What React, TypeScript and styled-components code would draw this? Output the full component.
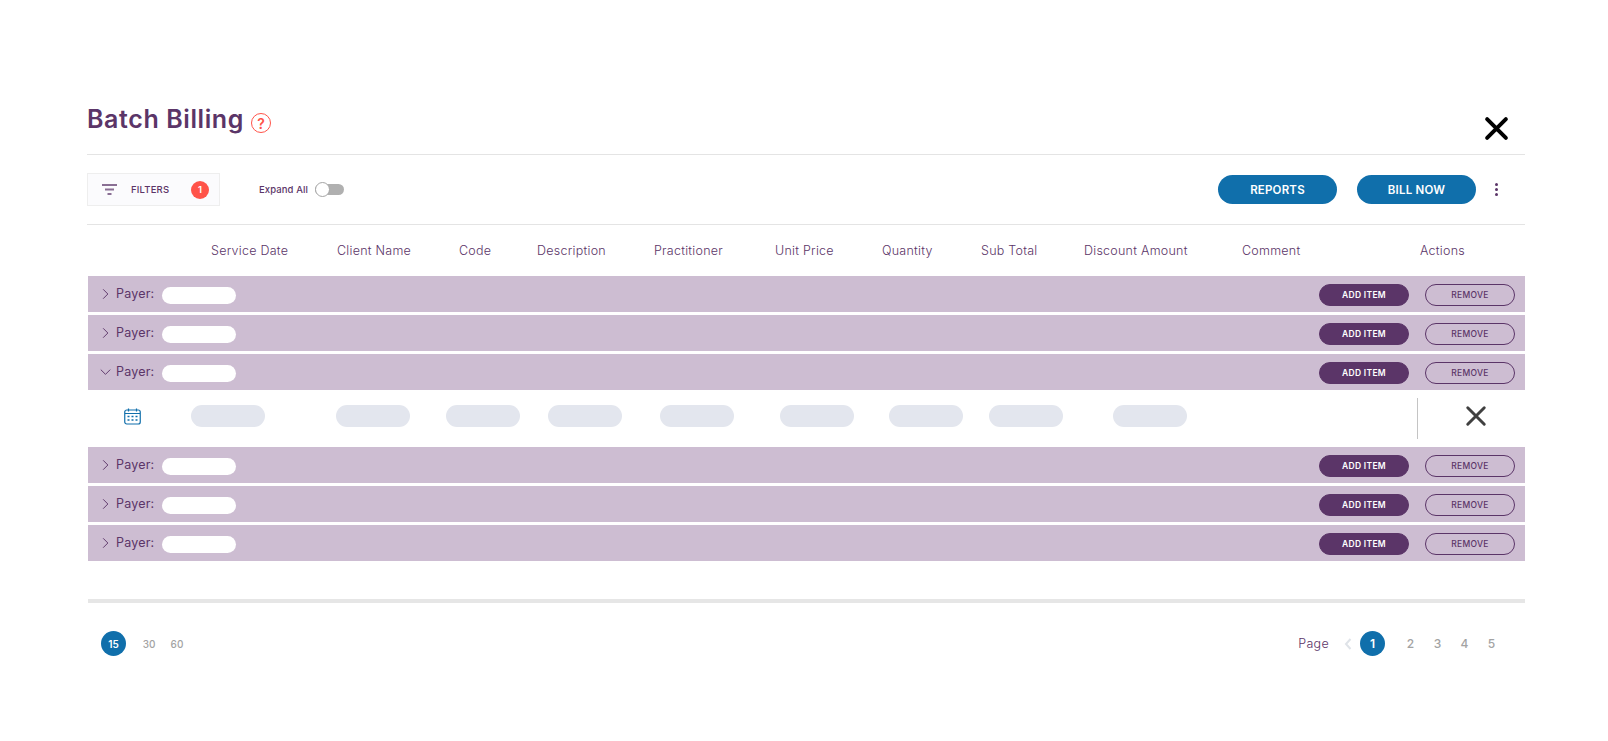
import React from 'react';
import styled, { createGlobalStyle } from 'styled-components';

const purple = '#5b3568';
const blue = '#106fab';

const GlobalStyle = createGlobalStyle`
  html, body {
    margin: 0;
    padding: 0;
    background: #fff;
    font-family: Inter, "Open Sans", sans-serif;
    color: ${purple};
  }
`;

const Page = styled.div`
  width: 1438px;
  margin-left: 87px;
  padding-top: 101px;
  padding-bottom: 60px;
`;

const Header = styled.header`
  height: 53px;
  display: flex;
  justify-content: space-between;
  border-bottom: 1px solid #e4e4e4;
`;

const TitleGroup = styled.div`
  display: flex;
  align-items: flex-start;
`;

const Title = styled.h1`
  margin: 0;
  font-size: 25px;
  line-height: 36px;
  font-weight: 600;
  letter-spacing: 0.6px;
  color: ${purple};
`;

const HelpBadge = styled.span`
  width: 20px;
  height: 20px;
  margin: 12px 0 0 7px;
  box-sizing: border-box;
  border: 1px solid #ff5349;
  border-radius: 50%;
  color: #ff5349;
  font-size: 14px;
  font-weight: 600;
  display: flex;
  align-items: center;
  justify-content: center;
`;

const CloseButton = styled.button`
  width: 25px;
  height: 25px;
  margin: 15px 16px 0 0;
  padding: 0;
  border: 0;
  background: none;
  color: #000;
`;

const Toolbar = styled.div`
  height: 69px;
  display: flex;
  align-items: center;
  border-bottom: 1px solid #e4e4e4;
`;

const FilterBox = styled.div`
  width: 133px;
  height: 33px;
  box-sizing: border-box;
  padding: 0 10px 0 14px;
  border: 1px solid #eeeeee;
  background: #fbfbfd;
  display: flex;
  align-items: center;
`;

const FilterLabel = styled.span`
  margin-left: 14px;
  font-size: 9.5px;
  font-weight: 500;
  letter-spacing: 0.2px;
  flex: 1;
`;

const CountBadge = styled.span`
  width: 18px;
  height: 18px;
  border-radius: 50%;
  background: #ff5349;
  color: #fff;
  font-size: 9.5px;
  font-weight: 600;
  display: flex;
  align-items: center;
  justify-content: center;
`;

const ExpandLabel = styled.span`
  margin-left: 39px;
  width: 56px;
  font-size: 9.5px;
  font-weight: 500;
  letter-spacing: 0.1px;
`;

const ToggleTrack = styled.span`
  width: 29px;
  height: 11px;
  border-radius: 6px;
  background: #b0b0b0;
  display: flex;
  align-items: center;
`;

const ToggleKnob = styled.span`
  width: 15px;
  height: 15px;
  box-sizing: border-box;
  border: 1px solid #a5a5a5;
  border-radius: 50%;
  background: #fff;
`;

const ToolbarActions = styled.div`
  margin-left: auto;
  display: flex;
  align-items: center;
  gap: 20px;
`;

const PrimaryButton = styled.button`
  width: 119px;
  height: 29px;
  padding: 0;
  border: 0;
  border-radius: 15px;
  background: ${blue};
  color: #fff;
  font-family: inherit;
  font-size: 11.5px;
  font-weight: 600;
  letter-spacing: 0.2px;
`;

const MenuDots = styled.span`
  width: 3px;
  margin: 0 27px 0 -1px;
  display: flex;
  flex-direction: column;
  gap: 2px;

  i {
    width: 3px;
    height: 3px;
    border-radius: 50%;
    background: ${purple};
  }
`;

const ColumnRow = styled.div`
  height: 51px;
  padding-left: 124px;
  display: grid;
  grid-template-columns: 126px 122px 78px 117px 121px 107px 99px 103px 158px 178px 1fr;
  align-items: center;
  font-size: 12.5px;
  font-weight: 300;
  letter-spacing: 0.25px;
  color: ${purple};
`;

const PayerRow = styled.div<{ $open?: boolean }>`
  height: 36px;
  margin: 0 0 ${(p) => (p.$open ? 0 : 3)}px 1px;
  padding: 0 10px 0 12px;
  background: #cdbdd2;
  display: flex;
  align-items: center;
`;

const Chevron = styled.span`
  width: 11px;
  height: 16px;
  display: flex;
  align-items: center;
  justify-content: center;
  margin-top: -1px;
`;

const PayerLabel = styled.span`
  margin-left: 5px;
  width: 46px;
  font-size: 12.5px;
  font-weight: 400;
  letter-spacing: 0.2px;
  margin-top: -1px;
`;

const PayerPill = styled.span`
  width: 74px;
  height: 17px;
  margin-top: 3px;
  border-radius: 9px;
  background: #fff;
`;

const RowAction = styled.button<{ $outline?: boolean }>`
  width: 90px;
  height: 22px;
  padding: 0;
  margin-top: 2px;
  margin-left: ${(p) => (p.$outline ? '16px' : 'auto')};
  box-sizing: border-box;
  border: 1px solid ${purple};
  border-radius: 11px;
  background: ${(p) => (p.$outline ? 'transparent' : purple)};
  color: ${(p) => (p.$outline ? purple : '#fff')};
  font-family: inherit;
  font-size: 8.5px;
  font-weight: ${(p) => (p.$outline ? 500 : 600)};
  letter-spacing: 0.3px;
`;

const DetailRow = styled.div`
  height: 57px;
  display: grid;
  grid-template-columns: 104px 145px 110px 102px 112px 120px 109px 100px 124px 304px 1fr;
  align-items: center;
`;

const CalendarCell = styled.span`
  display: flex;
  justify-content: flex-end;
  padding-right: 50px;
  margin-bottom: 5px;
`;

const ValuePill = styled.span`
  width: 74px;
  height: 22px;
  margin-bottom: 5px;
  border-radius: 11px;
  background: #e3e6ee;
`;

const RemoveCell = styled.span`
  grid-column: 11;
  height: 41px;
  box-sizing: border-box;
  padding: 0 0 5px 8px;
  border-left: 1px solid #c4c4c4;
  display: flex;
  align-items: center;
  justify-content: center;
  color: #404040;
`;

const ScrollBar = styled.div`
  height: 4px;
  margin: 38px 0 28px 1px;
  background: #e6e6e6;
`;

const Footer = styled.footer`
  padding: 0 20px 0 14px;
  display: flex;
  justify-content: space-between;
  align-items: center;
`;

const SizeGroup = styled.div`
  display: flex;
  align-items: center;
`;

const NumberCell = styled.span<{ $active?: boolean; $small?: boolean }>`
  width: ${(p) => (p.$active ? '25px' : p.$small ? '28px' : '27px')};
  height: 25px;
  margin-right: ${(p) => (p.$active && p.$small ? '9px' : 0)};
  border-radius: 50%;
  background: ${(p) => (p.$active ? blue : 'transparent')};
  color: ${(p) => (p.$active ? '#fff' : '#a3a3a3')};
  font-size: ${(p) => (p.$small ? '10px' : '12px')};
  font-weight: ${(p) => (p.$active ? 600 : 500)};
  display: flex;
  align-items: center;
  justify-content: center;
`;

const PageGroup = styled.div`
  display: flex;
  align-items: center;
`;

const PageLabel = styled.span`
  margin-right: 12px;
  font-size: 12.5px;
  font-weight: 300;
  letter-spacing: 0.3px;
`;

const PageGap = styled.span`
  width: 12px;
`;

const PrevArrow = styled.span`
  width: 13px;
  margin-right: 6px;
  display: flex;
  justify-content: center;
  color: #dfe3e8;
`;

const columns = [
  'Service Date',
  'Client Name',
  'Code',
  'Description',
  'Practitioner',
  'Unit Price',
  'Quantity',
  'Sub Total',
  'Discount Amount',
  'Comment',
  'Actions',
];

const Cross = ({ size, weight }: { size: number; weight: number }) => (
  <svg width={size} height={size} viewBox="0 0 24 24" fill="none" stroke="currentColor" strokeWidth={weight} strokeLinecap="round">
    <path d="M3 3l18 18M21 3L3 21" />
  </svg>
);

const FilterIcon = () => (
  <svg width="15" height="11" viewBox="0 0 15 11" stroke="#8a6f94" strokeWidth="1.8">
    <path d="M0 1h15M3 5.5h9M5.5 10h4" />
  </svg>
);

const CalendarIcon = () => (
  <svg width="17" height="17" viewBox="0 0 17 17" fill="none" stroke={blue}>
    <rect x="0.75" y="2" width="15.5" height="14" rx="2" strokeWidth="1.2" />
    <path d="M1 5.5h15M4.5 0.5v3M12.5 0.5v3" strokeWidth="1.2" />
    <path d="M3.5 8.5h2M7.5 8.5h2M11.5 8.5h2M3.5 12h2M7.5 12h2M11.5 12h2" strokeWidth="1.6" />
  </svg>
);

const Caret = ({ open }: { open?: boolean }) => (
  <Chevron>
    <svg width="14" height="14" viewBox="0 0 14 14" fill="none" stroke={purple} strokeWidth="1.2">
      <path d={open ? 'M1 4l6 6 6-6' : 'M4 1l6 6-6 6'} />
    </svg>
  </Chevron>
);

const Payer = ({ open }: { open?: boolean }) => (
  <PayerRow $open={open}>
    <Caret open={open} />
    <PayerLabel>Payer:</PayerLabel>
    <PayerPill />
    <RowAction>ADD ITEM</RowAction>
    <RowAction $outline>REMOVE</RowAction>
  </PayerRow>
);

export default function App() {
  return (
    <Page>
      <GlobalStyle />
      <Header>
        <TitleGroup>
          <Title>Batch Billing</Title>
          <HelpBadge>?</HelpBadge>
        </TitleGroup>
        <CloseButton>
          <Cross size={25} weight={3.8} />
        </CloseButton>
      </Header>

      <Toolbar>
        <FilterBox>
          <FilterIcon />
          <FilterLabel>FILTERS</FilterLabel>
          <CountBadge>1</CountBadge>
        </FilterBox>
        <ExpandLabel>Expand All</ExpandLabel>
        <ToggleTrack>
          <ToggleKnob />
        </ToggleTrack>
        <ToolbarActions>
          <PrimaryButton>REPORTS</PrimaryButton>
          <PrimaryButton>BILL NOW</PrimaryButton>
          <MenuDots>
            <i />
            <i />
            <i />
          </MenuDots>
        </ToolbarActions>
      </Toolbar>

      <ColumnRow>
        {columns.map((c) => (
          <span key={c}>{c}</span>
        ))}
      </ColumnRow>

      <Payer />
      <Payer />
      <Payer open />
      <DetailRow>
        <CalendarCell>
          <CalendarIcon />
        </CalendarCell>
        {Array.from({ length: 9 }).map((_, i) => (
          <ValuePill key={i} />
        ))}
        <RemoveCell>
          <Cross size={22} weight={3.2} />
        </RemoveCell>
      </DetailRow>
      <Payer />
      <Payer />
      <Payer />

      <ScrollBar />

      <Footer>
        <SizeGroup>
          <NumberCell $active $small>15</NumberCell>
          <NumberCell $small>30</NumberCell>
          <NumberCell $small>60</NumberCell>
        </SizeGroup>
        <PageGroup>
          <PageLabel>Page</PageLabel>
          <PrevArrow>
            <svg width="8" height="12" viewBox="0 0 8 12" fill="none" stroke="currentColor" strokeWidth="2">
              <path d="M6.5 1L2 6l4.5 5" />
            </svg>
          </PrevArrow>
          <NumberCell $active>1</NumberCell>
          <PageGap />
          <NumberCell>2</NumberCell>
          <NumberCell>3</NumberCell>
          <NumberCell>4</NumberCell>
          <NumberCell>5</NumberCell>
        </PageGroup>
      </Footer>
    </Page>
  );
}
